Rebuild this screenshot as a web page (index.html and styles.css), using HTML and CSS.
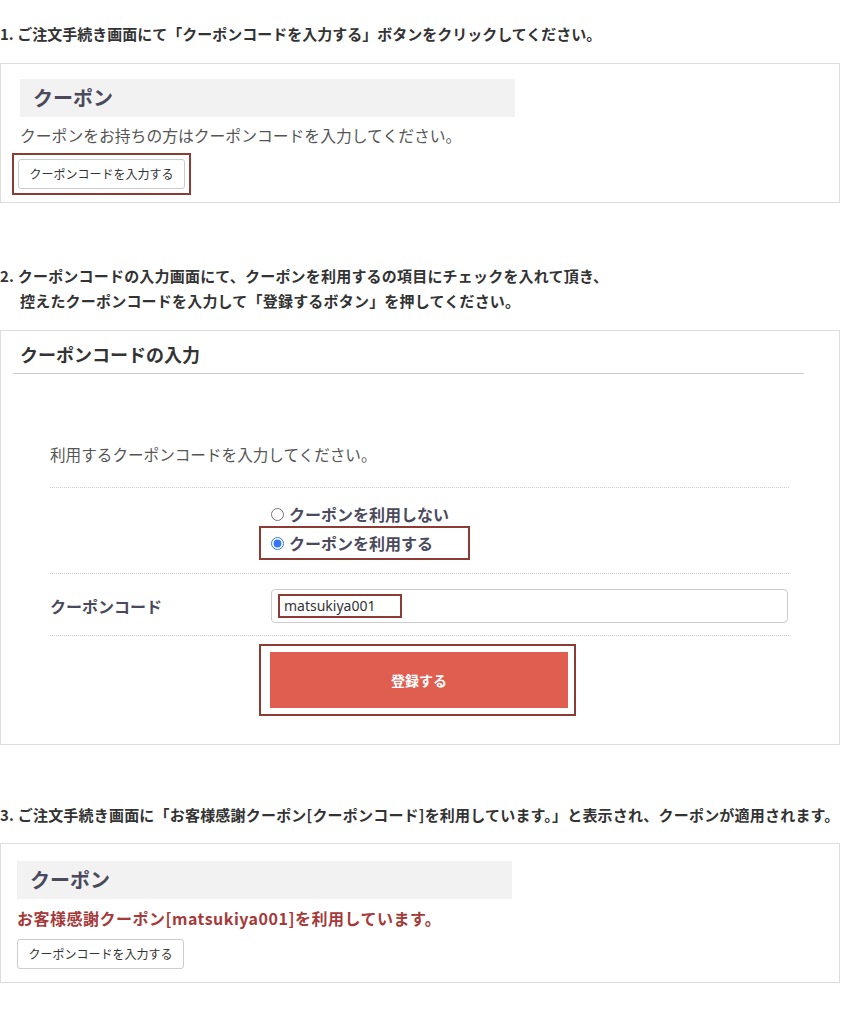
FILE: index.html
```html
<!DOCTYPE html>
<html lang="ja">
<head>
<meta charset="utf-8">
<title>クーポンの利用方法</title>
<link rel="stylesheet" href="styles.css">
</head>
<body>
<div class="page">
  <p class="step step1">1. ご注文手続き画面にて「クーポンコードを入力する」ボタンをクリックしてください。</p>
  <div class="shot shot1">
    <div class="coupon-head">クーポン</div>
    <p class="coupon-desc">クーポンをお持ちの方はクーポンコードを入力してください。</p>
    <div class="mark mark-btn"><span class="btn-plain">クーポンコードを入力する</span></div>
  </div>

  <p class="step step2">2. クーポンコードの入力画面にて、クーポンを利用するの項目にチェックを入れて頂き、<span class="indent">控えたクーポンコードを入力して「登録するボタン」を押してください。</span></p>
  <div class="shot shot2">
    <h2 class="form-title">クーポンコードの入力</h2>
    <p class="form-lead">利用するクーポンコードを入力してください。</p>
    <div class="form">
      <div class="row row-radio">
        <div class="label"></div>
        <div class="field">
          <label class="radio-line first"><input type="radio" name="use">クーポンを利用しない</label>
          <div class="mark mark-radio">
            <label class="radio-line"><input type="radio" name="use" checked>クーポンを利用する</label>
          </div>
        </div>
      </div>
      <div class="row row-code">
        <div class="label">クーポンコード</div>
        <div class="field">
          <div class="input"><div class="mark mark-input">matsukiya001</div></div>
        </div>
      </div>
      <div class="row row-submit">
        <div class="label"></div>
        <div class="field">
          <div class="mark mark-submit"><div class="submit">登録する</div></div>
        </div>
      </div>
    </div>
  </div>

  <p class="step step3">3. ご注文手続き画面に「お客様感謝クーポン[クーポンコード]を利用しています。」と表示され、クーポンが適用されます。</p>
  <div class="shot shot3">
    <div class="coupon-head head3">クーポン</div>
    <p class="used">お客様感謝クーポン[matsukiya001]を利用しています。</p>
    <span class="btn-plain btn3">クーポンコードを入力する</span>
  </div>
</div>
</body>
</html>
```

FILE: styles.css
```css
body {
  margin: 0;
  background: #fff;
  color: #333;
  font-family: "Noto Sans CJK JP", "Noto Sans", sans-serif;
}

.page {
  width: 841px;
}

.step {
  margin: 0;
  font-size: 15px;
  line-height: 25px;
  font-weight: 600;
  color: #333;
  white-space: nowrap;
}

.step .indent {
  display: block;
  padding-left: 20px;
}

.step1 {
  padding-top: 21px;
  margin-bottom: 17px;
}

.step2 {
  margin-top: 60px;
  margin-bottom: 17px;
  letter-spacing: 0.2px;
}

.step3 {
  margin-top: 57px;
  margin-bottom: 16px;
  letter-spacing: 0.2px;
}

.shot {
  box-sizing: border-box;
  width: 840px;
  border: 1px solid #ddd;
  background: #fff;
}

.mark {
  border: 2px solid #8e3b33;
  box-sizing: border-box;
}

/* box 1 & 3 */
.shot1 {
  padding: 15px 0 7px;
}

.coupon-head {
  box-sizing: border-box;
  margin-left: 19px;
  width: 495px;
  height: 38px;
  padding-left: 13px;
  background: #f2f2f2;
  font-size: 20px;
  font-weight: 700;
  line-height: 38px;
  color: #4a4a5c;
}

.coupon-desc {
  margin: 7px 0 0 19px;
  font-size: 15.8px;
  line-height: 24px;
  color: #555;
}

.mark-btn {
  display: flex;
  width: fit-content;
  margin: 5px 0 0 11px;
  padding: 4px;
}

.btn-plain {
  display: block;
  box-sizing: border-box;
  width: 167px;
  height: 30px;
  border: 1px solid #ccc;
  border-radius: 3px;
  background: #fff;
  font-size: 12px;
  line-height: 28px;
  text-align: center;
  color: #333;
}

.shot3 {
  padding: 17px 0 13px;
}

.head3 {
  margin-left: 16px;
}

.used {
  margin: 7px 0 0 16px;
  font-size: 16px;
  font-weight: 700;
  line-height: 24px;
  letter-spacing: 0.5px;
  color: #a63a3a;
}

.btn3 {
  margin: 9px 0 0 16px;
}

/* box 2 */
.shot2 {
  padding: 11px 0 28px;
}

.form-title {
  box-sizing: border-box;
  margin: 0 0 0 12px;
  width: 791px;
  padding: 0 0 7px 7px;
  border-bottom: 1px solid #ccc;
  font-size: 18px;
  font-weight: 700;
  line-height: 24px;
  color: #333;
}

.form-lead {
  margin: 68px 0 0 49px;
  padding-bottom: 21px;
  font-size: 15.6px;
  line-height: 24px;
  color: #555;
}

.form {
  margin-left: 49px;
  width: 739px;
}

.row {
  display: grid;
  grid-template-columns: 209px 1fr;
  align-items: center;
  border-top: 1px dotted #ccc;
}

.label {
  font-size: 16px;
  font-weight: 700;
  line-height: 24px;
  color: #4a4a5c;
}

.row-radio {
  padding: 14px 0 13px;
}

.radio-line {
  display: flex;
  align-items: center;
  font-size: 16px;
  font-weight: 700;
  line-height: 24px;
  color: #4a4a5c;
}

.radio-line.first {
  padding-left: 12px;
}

.radio-line input {
  width: 13px;
  height: 13px;
  margin: 0 5px 0 0;
  accent-color: #3478f6;
}

.mark-radio {
  width: 211px;
  padding: 3px 0 3px 10px;
}

.row-code {
  padding: 15px 0 12px;
}

.input {
  box-sizing: border-box;
  width: 517px;
  height: 34px;
  margin-left: 12px;
  padding: 4px 6px;
  border: 1px solid #ccc;
  border-radius: 4px;
  background: #fff;
}

.mark-input {
  width: 124px;
  height: 24px;
  padding-left: 4px;
  font-family: "Noto Sans", sans-serif;
  font-size: 14px;
  line-height: 20px;
  color: #333;
}

.row-submit {
  padding-top: 8px;
}

.mark-submit {
  width: fit-content;
  padding: 6px 6px 6px 9px;
}

.submit {
  display: flex;
  align-items: center;
  justify-content: center;
  width: 298px;
  height: 56px;
  background: #e05e50;
  color: #fff;
  font-size: 14px;
  font-weight: 700;
}
```
